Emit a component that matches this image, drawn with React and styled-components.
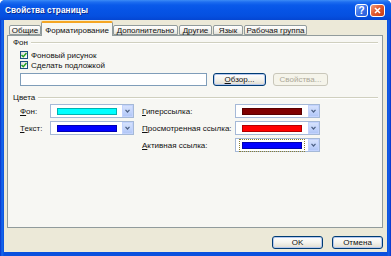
import React from "react";
import styled, { createGlobalStyle } from "styled-components";

const Global = createGlobalStyle`
  html, body { margin: 0; padding: 0; background: #ffffff; overflow: hidden; }
  body { font-family: "Liberation Sans", Arial, sans-serif; }
  #root { width: 391px; height: 256px; }
`;

const Window = styled.div`
  width: 391px;
  height: 256px;
  box-sizing: border-box;
  display: flex;
  flex-direction: column;
  background: linear-gradient(90deg, #0831C8 0px, #166AEE 2px, #0A50DE 4px, #0A50DE 387px, #1660E8 389px, #0831C8 391px);
  border-radius: 5px 5px 0 0;
  overflow: hidden;
`;

const TitleBar = styled.div`
  height: 20px;
  flex: none;
  display: flex;
  align-items: center;
  padding: 0 6px 0 5px;
  background: linear-gradient(180deg, #3C8CF6 0px, #1E6EF0 2px, #0A5AEA 5px, #0654E6 10px, #0550E0 16px, #0446D2 20px);
`;

const Title = styled.div`
  flex: 1;
  color: #ffffff;
  font-size: 8.2px;
  font-weight: bold;
  letter-spacing: 0.1px;
  text-shadow: 1px 1px 0 #0A2A90;
`;

const CaptionButton = styled.div`
  width: ${(p) => p.$w}px;
  height: 13px;
  box-sizing: border-box;
  border: 1px solid #ffffff;
  border-radius: 3px;
  margin-left: 2px;
  display: flex;
  align-items: center;
  justify-content: center;
  color: #ffffff;
  font-size: 10px;
  font-weight: bold;
  background: ${(p) =>
    p.$close
      ? "linear-gradient(135deg, #F0A080 0%, #E05A30 45%, #C83C14 100%)"
      : "linear-gradient(135deg, #7FA8FA 0%, #3D74EA 45%, #2A5CD8 100%)"};
`;

const Frame = styled.div`
  flex: 1;
  margin: 0 4px 4px 4px;
  background: #ECE9D8;
  display: flex;
  flex-direction: column;
  padding: 0 4px 0 3px;
`;

const TabRow = styled.div`
  height: 15px;
  flex: none;
  display: flex;
  align-items: flex-end;
  padding-left: 2px;
  position: relative;
  z-index: 1;
`;

const Tab = styled.div`
  box-sizing: border-box;
  height: ${(p) => (p.$active ? 15 : 10)}px;
  margin-bottom: ${(p) => (p.$active ? -1 : 0)}px;
  margin-right: ${(p) => p.$gap || 0}px;
  width: ${(p) => p.$w}px;
  display: flex;
  align-items: center;
  justify-content: center;
  padding-top: ${(p) => (p.$active ? 1 : 0)}px;
  border: 1px solid #919B9C;
  border-top: ${(p) => (p.$active ? "2px solid #F5A623" : "1px solid #919B9C")};
  border-bottom: ${(p) => (p.$active ? "none" : "1px solid #919B9C")};
  border-radius: 2px 2px 0 0;
  background: ${(p) => (p.$active ? "#F7F7F3" : "linear-gradient(180deg, #FFFFFF 0%, #F2F1EC 60%, #E4E2D8 100%)")};
  font-size: 8px;
  color: #111;
  white-space: nowrap;
`;

const Panel = styled.div`
  height: 193px;
  flex: none;
  box-sizing: border-box;
  border: 1px solid #919B9C;
  background: #F7F7F3;
  display: flex;
  flex-direction: column;
  padding: 1px 4px 0 5px;
`;

const GroupHeader = styled.div`
  height: 10px;
  display: flex;
  align-items: center;
  gap: 3px;
  margin-top: ${(p) => p.$mt || 0}px;
  font-size: 8px;
  color: #111;
`;

const GroupLine = styled.div`
  flex: 1;
  height: 1px;
  background: #D0D0BF;
  box-shadow: 0 1px 0 #ffffff;
`;

const Section = styled.div`
  padding-left: 7px;
  display: flex;
  flex-direction: column;
  margin-top: ${(p) => p.$mt || 0}px;
`;

const CheckRow = styled.div`
  height: 10px;
  display: flex;
  align-items: center;
  gap: 3px;
  font-size: 8px;
  color: #111;
`;

const CheckBox = styled.div`
  width: 8px;
  height: 8px;
  box-sizing: border-box;
  border: 1px solid #1C5180;
  background: linear-gradient(135deg, #DCDCD7 0%, #FFFFFF 100%);
  display: flex;
  align-items: center;
  justify-content: center;
`;

const InputRow = styled.div`
  display: flex;
  align-items: center;
  margin-top: 2px;
  height: 14px;
`;

const TextInput = styled.div`
  width: 187px;
  height: 13px;
  box-sizing: border-box;
  border: 1px solid #7F9DB9;
  background: #ffffff;
`;

const Button = styled.div`
  width: ${(p) => p.$w}px;
  height: 13px;
  margin-left: ${(p) => p.$ml || 0}px;
  box-sizing: border-box;
  border: 1px solid ${(p) => (p.$disabled ? "#C9C7BA" : "#003C74")};
  border-radius: 3px;
  background: ${(p) =>
    p.$disabled ? "#F5F4EA" : "linear-gradient(180deg, #FFFFFF 0%, #F4F3EE 50%, #E6E3D8 85%, #D6D0C5 100%)"};
  box-shadow: ${(p) => (p.$disabled ? "none" : "inset 0 0 0 1px #B6C8EE")};
  display: flex;
  align-items: center;
  justify-content: center;
  font-size: 8px;
  color: ${(p) => (p.$disabled ? "#ACA899" : "#111")};
`;

const ColorGrid = styled.div`
  display: grid;
  grid-template-columns: 30px 84px 101px 85px;
  grid-auto-rows: 14px;
  row-gap: 3px;
  margin-top: 2px;
  align-items: center;
`;

const ColorLabel = styled.div`
  font-size: 8px;
  color: #111;
  padding-left: ${(p) => (p.$right ? 8 : 0)}px;
  white-space: nowrap;
  grid-column: ${(p) => p.$col};
`;

const Combo = styled.div`
  grid-column: ${(p) => p.$col};
  width: ${(p) => p.$w}px;
  height: 14px;
  box-sizing: border-box;
  border: 1px solid #A5B9D7;
  background: #ffffff;
  display: flex;
  align-items: center;
  padding: 0 0 0 6px;
`;

const Swatch = styled.div`
  width: 60px;
  height: 7px;
  box-sizing: border-box;
  border: 1px solid rgba(0, 0, 0, 0.3);
  background: ${(p) => p.$color};
  outline: ${(p) => (p.$focus ? "1px dotted #8A7E2E" : "none")};
  outline-offset: 2px;
`;

const DropButton = styled.div`
  margin-left: auto;
  width: 11px;
  height: 12px;
  box-sizing: border-box;
  border: 1px solid #C3D3FD;
  background: linear-gradient(180deg, #D6E2FC 0%, #C1D3FB 60%, #B2C7F6 100%);
  display: flex;
  align-items: center;
  justify-content: center;
`;

const Footer = styled.div`
  display: flex;
  justify-content: flex-end;
  gap: 9px;
  padding-top: 8px;
`;

const U = styled.span`
  text-decoration: underline;
`;

const Check = () => (
  <svg width="6" height="6" viewBox="0 0 6 6">
    <path d="M0.5 3 L2.3 4.8 L5.5 1" stroke="#21A121" strokeWidth="1.4" fill="none" />
  </svg>
);

const Chevron = () => (
  <svg width="5" height="4" viewBox="0 0 5 4">
    <path d="M0.5 0.8 L2.5 3 L4.5 0.8" stroke="#4D6185" strokeWidth="1.2" fill="none" />
  </svg>
);

const CloseX = () => (
  <svg width="7" height="7" viewBox="0 0 7 7">
    <path d="M1 1 L6 6 M6 1 L1 6" stroke="#ffffff" strokeWidth="1.6" />
  </svg>
);

const ColorCombo = ({ col, w, color, focus }) => (
  <Combo $col={col} $w={w}>
    <Swatch $color={color} $focus={focus} />
    <DropButton>
      <Chevron />
    </DropButton>
  </Combo>
);

export default function App() {
  return (
    <>
      <Global />
      <Window>
        <TitleBar>
          <Title>Свойства страницы</Title>
          <CaptionButton $w={13}>?</CaptionButton>
          <CaptionButton $w={15} $close>
            <CloseX />
          </CaptionButton>
        </TitleBar>
        <Frame>
          <TabRow>
            <Tab $w={32}>Общие</Tab>
            <Tab $w={72} $active>Форматирование</Tab>
            <Tab $w={65} $gap={1}>Дополнительно</Tab>
            <Tab $w={33} $gap={1}>Другие</Tab>
            <Tab $w={30} $gap={1}>Язык</Tab>
            <Tab $w={63}>Рабочая группа</Tab>
          </TabRow>
          <Panel>
            <GroupHeader>
              Фон
              <GroupLine />
            </GroupHeader>
            <Section $mt={3}>
              <CheckRow>
                <CheckBox>
                  <Check />
                </CheckBox>
                <span>Фоновый рисунок</span>
              </CheckRow>
              <CheckRow>
                <CheckBox>
                  <Check />
                </CheckBox>
                <span>Сделать подложкой</span>
              </CheckRow>
              <InputRow>
                <TextInput />
                <Button $w={53} $ml={6}>
                  <span>
                    <U>О</U>бзор...
                  </span>
                </Button>
                <Button $w={55} $ml={7} $disabled>
                  Свойства...
                </Button>
              </InputRow>
            </Section>
            <GroupHeader $mt={6}>
              Цвета
              <GroupLine />
            </GroupHeader>
            <Section>
              <ColorGrid>
                <ColorLabel $col={1}>
                  <U>Ф</U>он:
                </ColorLabel>
                <ColorCombo col={2} w={84} color="#00FFFF" />
                <ColorLabel $col={3} $right>
                  <U>Г</U>иперссылка:
                </ColorLabel>
                <ColorCombo col={4} w={85} color="#800000" />

                <ColorLabel $col={1}>
                  <U>Т</U>екст:
                </ColorLabel>
                <ColorCombo col={2} w={84} color="#0000FF" />
                <ColorLabel $col={3} $right>
                  <U>П</U>росмотренная ссылка:
                </ColorLabel>
                <ColorCombo col={4} w={85} color="#FF0000" />

                <ColorLabel $col={3} $right>
                  <U>А</U>ктивная ссылка:
                </ColorLabel>
                <ColorCombo col={4} w={85} color="#0000FF" focus />
              </ColorGrid>
            </Section>
          </Panel>
          <Footer>
            <Button $w={51}>OK</Button>
            <Button $w={51}>Отмена</Button>
          </Footer>
        </Frame>
      </Window>
    </>
  );
}
